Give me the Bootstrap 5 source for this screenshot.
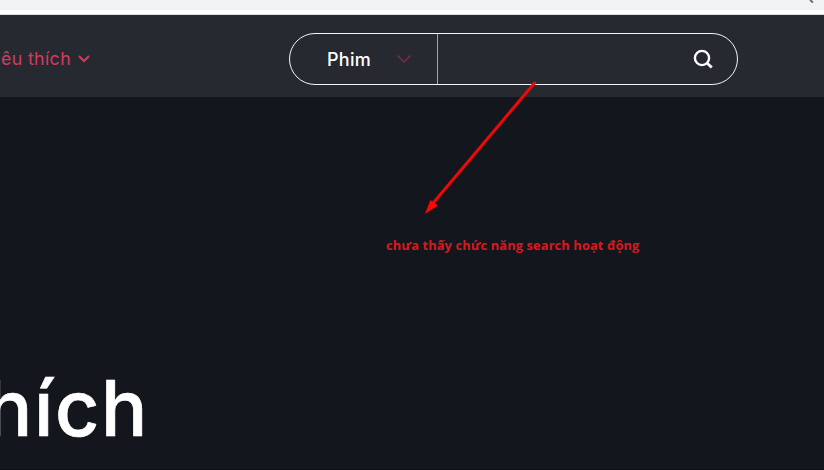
<!DOCTYPE html>
<html lang="vi">
<head>
<meta charset="utf-8">
<title>Yêu thích</title>
<link rel="stylesheet" href="https://cdn.jsdelivr.net/npm/bootstrap@5.3.0/dist/css/bootstrap.min.css">
<style>
body{background:#14161e;width:824px;height:470px;font-family:Inter,sans-serif}
svg{display:block;flex:none}
.chrome-strip{height:15px;background:#f1f3f4;border-bottom:1px solid #d9e0df;box-shadow:inset 0 -4px #fff}
.site-header{height:82px;padding-top:6px;background:#272931}
.fav-link{width:92px;color:#d53a5f;font-size:17.8px;letter-spacing:.35px;line-height:24px}
.fav-link svg{margin:0 2px 0 7px}
.search-box{width:449px;height:52px;margin-left:197px;border:1px solid #f4f5f7;border-radius:26px}
.search-type{width:148px;padding-left:37px;border-right:1px solid #a3a4aa;color:#fff;font-size:18px;letter-spacing:.3px;font-weight:500}
.search-type .label-text{width:69px}
.search-go{padding-right:23px}
.hero{height:373px;border-bottom:1px solid #0a0d13}
.hero h1{width:149px;margin:0 0 15px;font-size:77px;font-weight:500;letter-spacing:1.6px;line-height:92px;color:#fff;-webkit-text-stroke:.7px #fff}
.note-arrow{left:420px;top:78px}
.note-text{left:386px;top:236px;color:#dc181c;font:bold 12.8px/18px "Open Sans","Noto Sans",sans-serif;letter-spacing:.14px}
</style>
<script src="https://cdn.jsdelivr.net/npm/bootstrap@5.3.0/dist/js/bootstrap.bundle.min.js"></script>
</head>
<body class="position-relative overflow-hidden m-0">
<div class="chrome-strip d-flex justify-content-end pe-2"><svg width="8" height="4"><path d="M2 0 5 2.5" stroke="#62666a" stroke-width="1.7"/></svg></div>
<header class="site-header d-flex align-items-center">
  <a class="fav-link d-flex justify-content-end align-items-center text-nowrap text-decoration-none" href="#"><span>êu thích</span>
    <svg width="12" height="10" fill="none" stroke="#d53a5f" stroke-width="2"><path d="m1 2 5 5 5-5"/></svg></a>
  <form class="search-box d-flex overflow-hidden" onsubmit="return false">
    <div class="search-type d-flex align-items-center"><span class="label-text">Phim</span>
      <svg width="16" height="10" fill="none" stroke="#7c2a49" stroke-width="1.5"><path d="m1.5 1.5 6.5 6.5 6.5-6.5"/></svg></div>
    <div class="search-go flex-grow-1 d-flex align-items-center justify-content-end">
      <svg width="21" height="20" fill="none" stroke="#fff" stroke-width="2.4"><circle cx="9" cy="9" r="7.1"/><path d="m14 14 4.8 4.5" stroke-width="2.8"/></svg></div>
  </form>
</header>
<main class="hero d-flex align-items-end">
  <h1 class="d-flex justify-content-end text-nowrap"><span>hích</span></h1>
</main>
<svg class="note-arrow position-absolute" width="120" height="140"><path d="M114.500 5 14 124" stroke="#f00808" stroke-width="3" stroke-linecap="round"/><path d="m5 136 5.500-14 7.500 5.500Z" fill="#ff0505"/></svg>
<div class="note-text position-absolute text-nowrap">chưa thấy chức năng search hoạt động</div>
</body>
</html>
